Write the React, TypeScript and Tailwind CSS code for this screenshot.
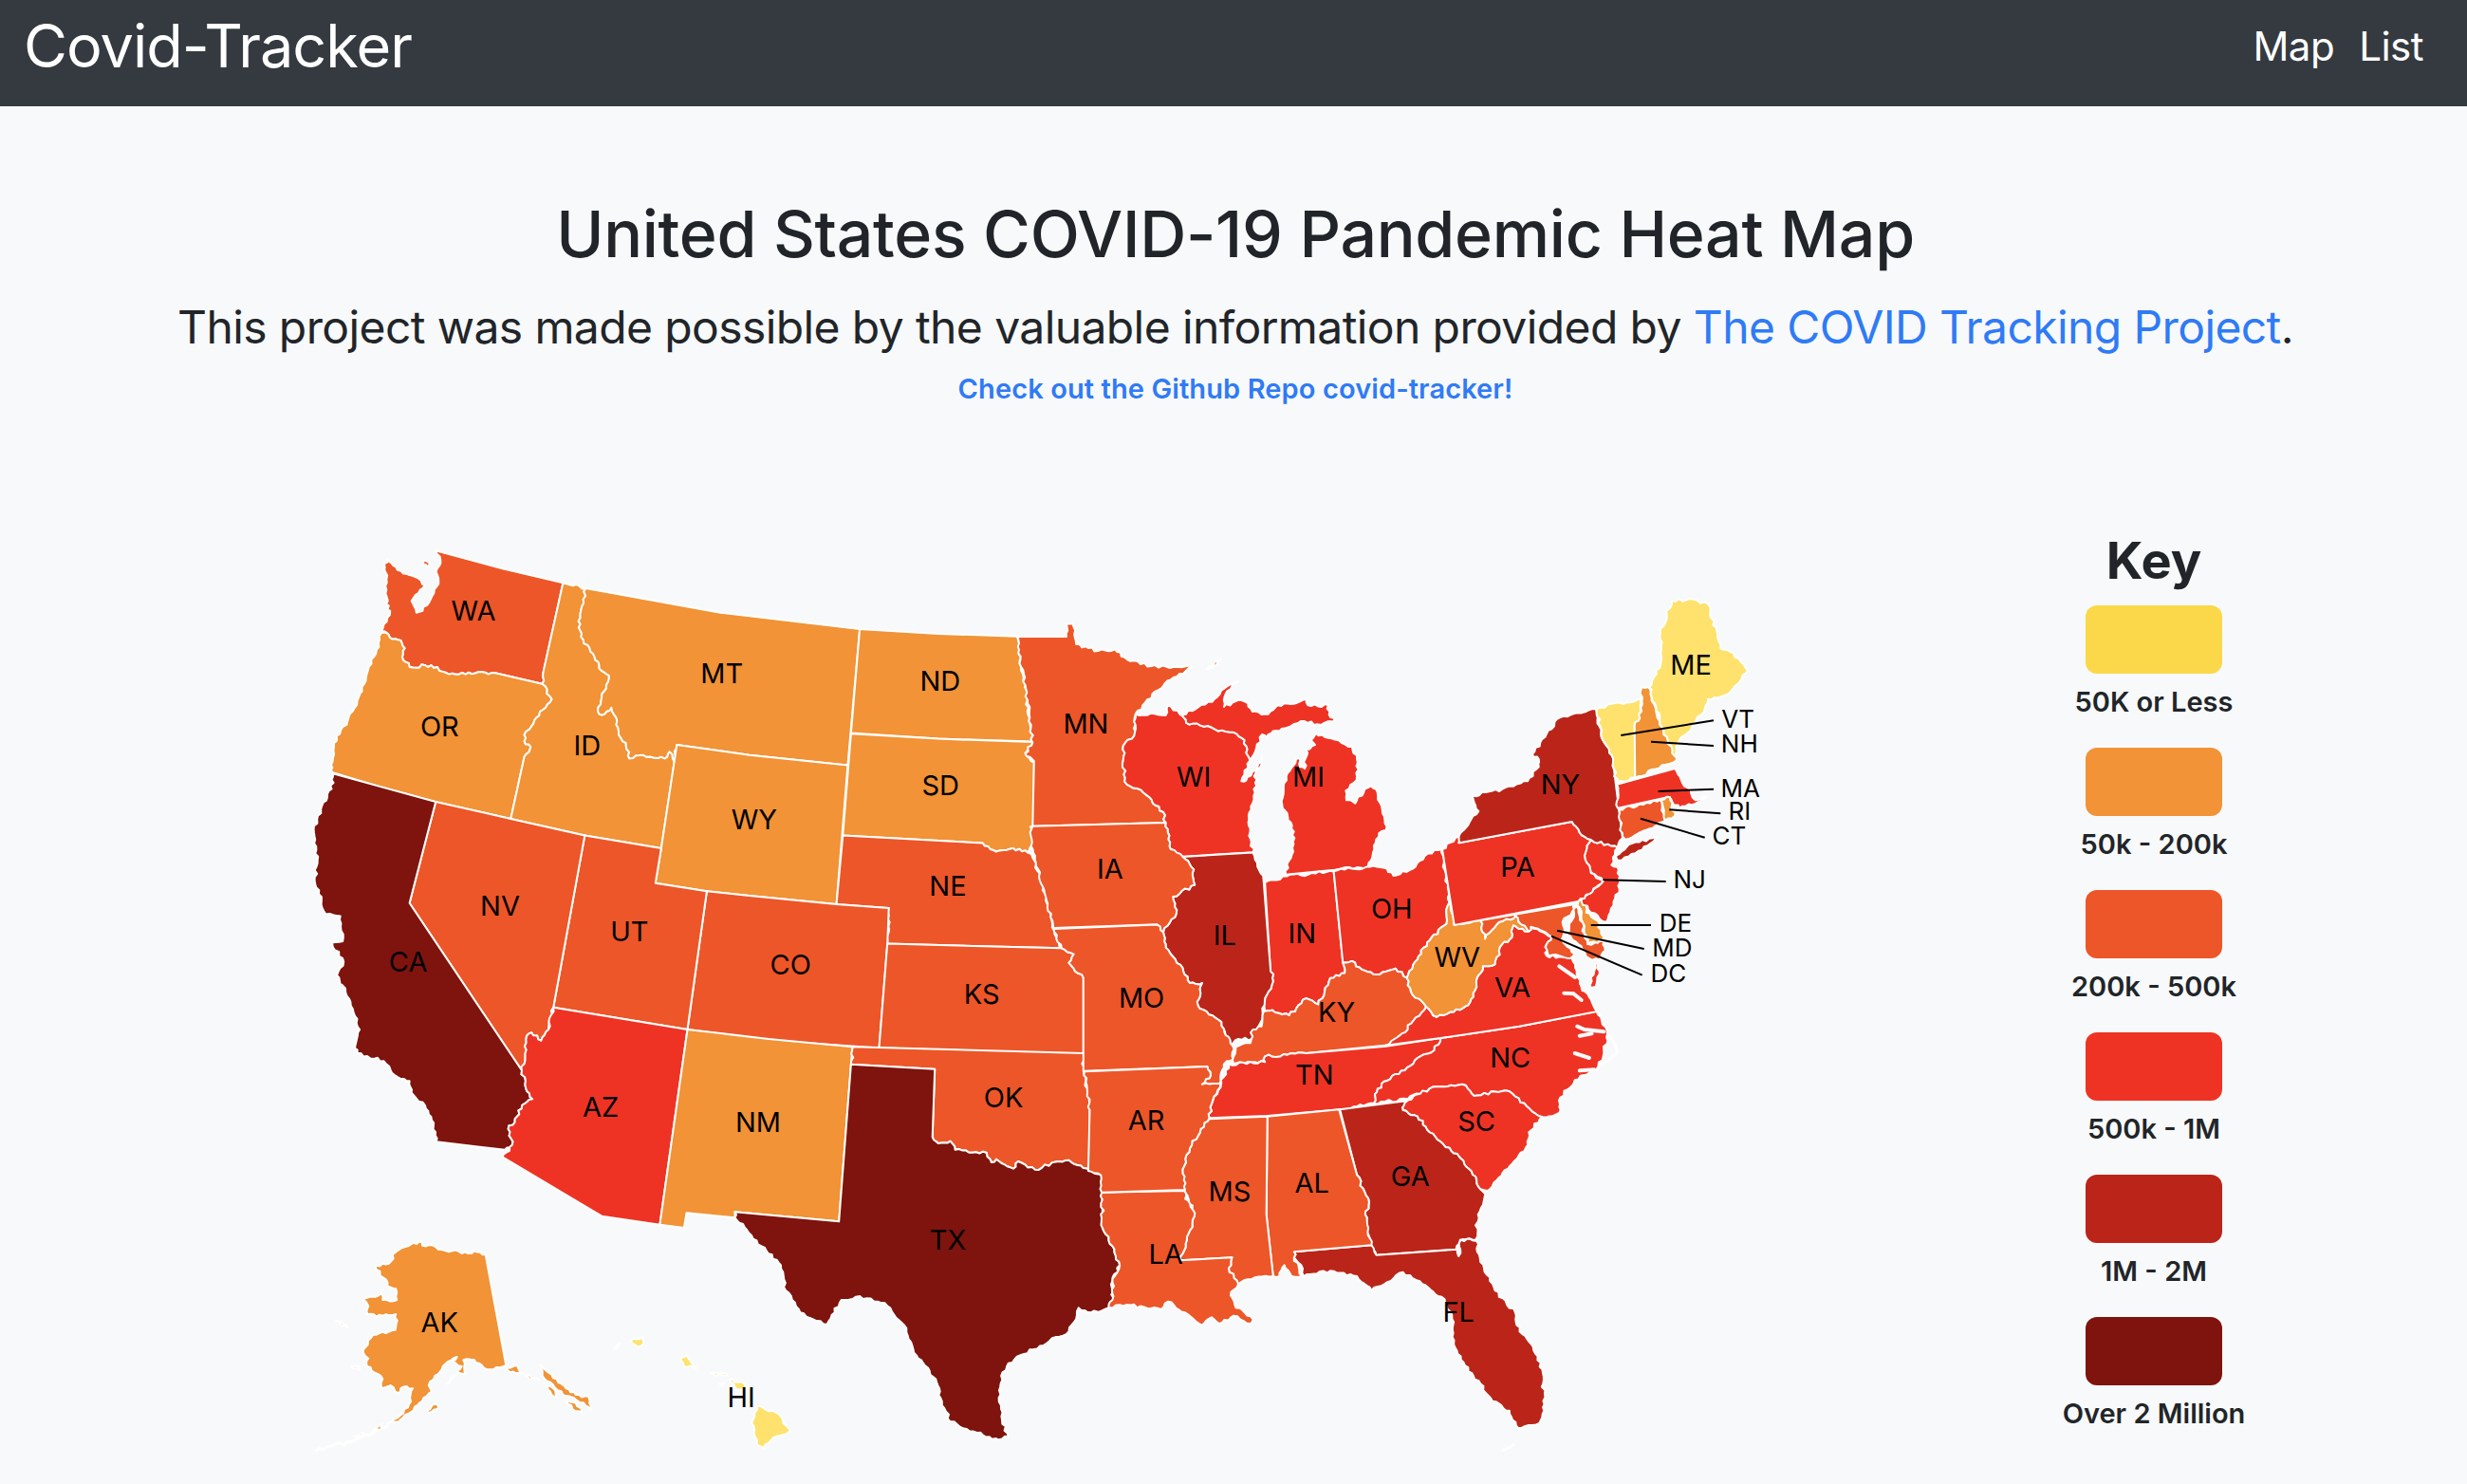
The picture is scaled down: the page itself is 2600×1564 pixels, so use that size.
import React from 'react';

// each tile is a crop of the map: [left, top, x scale, y scale]
const tiles: Record<string, number[]> = {
  a: [300, 560, 1.96, 2.8],
  b: [1050, 620, 1.96, 2.8],
  c: [1450, 600, 3, 3],
  d: [300, 1050, 1.96, 3],
  e: [1050, 1050, 1.96, 3],
  f: [1230, 700, 3, 3],
  g: [1520, 930, 3, 3],
  h: [330, 1290, 3, 3],
};

const pt = (tile: string, x: number, y: number) => {
  const [l, t, sx, sy] = tiles[tile];
  return [+(l + x / sx).toFixed(1), +(t + y / sy).toFixed(1)];
};

const readPoints = (segs: string[][]) =>
  segs.flatMap(([tile, s]) =>
    s
      .trim()
      .split(/\s+/)
      .map((p) => {
        const [x, y] = p.split(',').map(Number);
        return pt(tile, x, y);
      })
  );

// short edges are rivers and coasts, so they get a little noise. The noise comes from
// the two end points alone, so two neighbouring states get the very same border.
const wiggle = (p: number[], q: number[]) => {
  const swap = p[0] > q[0] || (p[0] === q[0] && p[1] > q[1]);
  const [a, b] = swap ? [q, p] : [p, q];
  const dx = b[0] - a[0];
  const dy = b[1] - a[1];
  const len = Math.hypot(dx, dy);
  if (len >= 50 || len < 5) return [];
  const n = Math.floor(len / 4);
  let seed = (Math.round(a[0] * 10) * 7919 + Math.round(a[1] * 10) * 104729 + Math.round(b[0] * 10) * 1299709 + Math.round(b[1] * 10) * 15485863) >>> 0;
  const out: number[][] = [];
  for (let i = 1; i <= n; i++) {
    seed = (seed * 1664525 + 1013904223) >>> 0;
    const t = i / (n + 1);
    const off = ((seed >>> 16) / 65535 - 0.5) * 3.4;
    out.push([+(a[0] + dx * t - (dy / len) * off).toFixed(1), +(a[1] + dy * t + (dx / len) * off).toFixed(1)]);
  }
  return swap ? out.reverse() : out;
};

const toPoints = (segs: string[][], flat?: boolean) => {
  const pts = readPoints(segs);
  if (flat) return pts.map((p) => p.join(',')).join(' ');
  return pts
    .flatMap((p, i) => [p, ...wiggle(p, pts[(i + 1) % pts.length])])
    .map((p) => p.join(','))
    .join(' ');
};

const Y = '#fee26d';
const O = '#f19336';
const M = '#ed5628';
const R = '#ee3325';
const D = '#bb2519';
const X = '#7e140d';

const states: { c: string; s: string[][]; flat?: boolean }[] = [
  // west
  { c: M, s: [['a', '312,57 450,110 575,152 535,410 532,450 435,418 400,415 360,422 320,412 315,400 290,395 265,402 245,380 248,345 240,322 222,318 215,305 200,295 212,255 218,235 210,215 212,130 207,105 212,82 230,105 245,125 270,135 290,160 262,205 272,240 285,235 305,190 318,155 315,110 322,85']] },
  { c: M, s: [['a', '288,85 300,95 295,105 285,98']] },
  { c: O, s: [['a', '200,300 215,305 222,318 240,322 248,345 245,380 265,402 290,395 315,400 320,412 360,422 400,415 435,418 532,450 552,495 520,550 510,575 495,600 495,620 508,635 495,665 467,848 310,798 200,755 100,712 96,690 102,625 130,560 150,500 170,420 190,350']] },
  { c: O, s: [['a', '575,152 622,168 607,265 617,320 640,370 650,405 670,425 655,490 647,530 655,542 675,520 685,550 690,600 705,625 712,670 740,660 785,670 795,650 805,680 778,935 620,897 467,848 495,665 508,635 495,620 495,600 510,575 520,550 552,495 532,450 535,410']] },
  { c: O, s: [['a', '622,168 900,240 1188,288 1163,690 960,660 810,630 805,680 795,650 785,670 740,660 712,670 705,625 690,600 685,550 675,520 655,542 647,530 655,490 670,425 650,405 640,370 617,320 607,265']] },
  { c: O, s: [['a', '1188,288 1350,302 1513,310 1520,345 1518,390 1530,450 1535,540 1545,620 1350,612 1170,595']] },
  { c: O, s: [['a', '1170,597 1350,612 1545,622 1530,655 1548,682 1548,868 1540,872 1552,910 1535,948 1505,935 1470,945 1442,920 1153,897']] },
  { c: O, flat: true, s: [['a', '810,630 960,660 1163,690 1140,1100 960,1075 872,1062 766,1038 778,935']] },
  { c: M, s: [['a', '1153,897 1442,920 1470,945 1505,935 1535,948'], ['b', '75,795 90,850 100,900 112,960 120,1010 135,1062'], ['a', '1245,1217 1248,1112 1140,1100']] },
  { c: M, flat: true, s: [['a', '872,1062 960,1075 1140,1100 1248,1112 1245,1217 1228,1525 1030,1505 832,1470']] },
  { c: M, flat: true, s: [['a', '620,897 778,935 766,1038 872,1062 832,1470 555,1405']] },
  { c: M, s: [['a', '312,798 467,848 620,897 555,1405'], ['d', '545,105 530,140 510,115 500,125 497,180 490,235'], ['a', '258,1097']] },
  { c: X, s: [['a', '100,715 312,798 258,1097'], ['d', '490,235 498,290 512,325 490,345 480,380 462,420 470,470 455,485 313,460 308,400 290,345 262,305 258,268 228,250 205,205 150,180'], ['a', '145,1525 155,1470 145,1430 120,1340 108,1310 122,1270 98,1215 120,1210 115,1135 85,1130 62,1030 68,970 60,880 80,800 97,760']] },
  { c: R, s: [['d', '555,35 832,105 775,722 655,695 450,508 470,470 462,420 480,380 490,345 512,325 498,290 490,235 497,180 500,125 510,115 530,140 545,105']] },
  { c: O, flat: true, s: [['d', '832,105 1000,135 1173,160 1170,215 1145,712 930,682 930,700 830,685 825,732 775,722']] },
  { c: M, s: [['a', '1245,1217'], ['b', '135,1062 160,1080 150,1105 180,1150 180,1375'], ['d', '1228,163']] },
  { c: M, s: [['d', '1173,160'], ['e', '180,180 180,236 193,360 192,552 150,518 130,522 80,548 45,522 35,545 0,515'], ['d', '1460,525 1450,495 1385,485 1375,458 1350,465 1338,445 1343,230 1170,215']] },
  { c: X, s: [['d', '1170,215 1343,230 1338,445 1350,465 1375,458 1385,485 1450,495 1460,525'], ['e', '0,515 35,545 45,522 80,548 130,522 150,518 192,552 218,565 220,735 240,790 255,850 240,900 240,965 232,985 195,1000 170,985 165,1020 150,1060 110,1090 50,1135 25,1160 10,1200 5,1270 12,1340 25,1392 5,1402'], ['d', '1430,1380 1375,1345 1355,1270 1345,1210 1305,1135 1280,1040 1240,970 1180,950 1150,960 1120,1038 1065,1000 1035,930 1025,850 985,790 950,730 930,700 930,682 1145,712']] },
  // midwest
  { c: M, s: [['b', '45,143 145,143 145,105 158,105 165,165 210,185 245,180 270,210 320,230 405,232 360,270 335,300 288,370 285,435 262,465 265,570 310,610 345,660 350,692 75,702 78,510 60,487 75,455 65,340 50,210']] },
  { c: R, s: [['b', '288,372 350,375 355,345 385,378'], ['f', '48,160 60,185 150,205 220,220 245,240 250,280 262,305 235,370 250,368 285,325 302,295 295,325 280,345 278,405 265,450 258,510 272,595 52,608'], ['b', '360,770 350,692 345,660 310,610 265,570 262,465 285,435']] },
  { c: R, s: [['f', '48,160 100,135 150,110 190,70 225,55 190,85 180,135 215,118 245,118 270,150 320,158 350,130 410,122 440,110 445,130 510,130 512,160 530,180 475,190 435,180 380,200 345,210 315,230 300,222 282,265 262,305 250,280 245,240 220,220 150,205 60,185']] },
  { c: R, s: [['b', '435,238 465,208 455,226']] },
  { c: R, s: [['f', '635,640 530,650 375,665 400,570 395,510 365,455 368,410 380,345 400,320 415,295 420,325 435,330 440,270 468,255 455,240 470,218 520,235 585,260 600,300 600,355 590,375 565,400 567,430 595,440 625,395 645,385 665,405 680,460 692,525 670,535 655,585']] },
  { c: R, s: [['b', '555,868 600,850 697,835 716,1105 720,1135 690,1150 665,1228 640,1210 605,1260 570,1245 552,1250 555,1210 572,1160 565,1100']] },
  { c: R, s: [['b', '697,835 765,822 800,825 820,848 860,828 885,790 920,768 935,905 930,990 890,1045 870,1095 848,1150 825,1122 785,1140 755,1125 735,1100 716,1105']] },
  { c: D, s: [['b', '385,792 530,780 552,860 565,1100 572,1160 555,1210 550,1270 528,1330 500,1330 485,1350 470,1300 465,1280 420,1240 415,1220 425,1165 400,1165 385,1120 350,1060 345,1015 372,960 365,910 410,875 408,830']] },
  { c: M, s: [['b', '75,702 350,692 360,770 385,792 408,830 410,875 365,910 372,960 345,1015 332,992 118,1002 100,900 80,800 70,720']] },
  { c: M, s: [['b', '118,1005 332,993 345,1015 350,1060 385,1120 400,1165 425,1165 415,1220 420,1240 465,1280 470,1300 488,1350'], ['e', '490,200 470,215 463,275 425,278 443,248 436,222 180,236'], ['b', '180,1150 150,1105 160,1080 135,1062']] },
  { c: M, s: [['b', '716,1105 735,1100 755,1125 785,1140 825,1122 848,1150 860,1200 888,1235 850,1290 845,1310 808,1348'], ['e', '640,180 555,190 555,208 490,213 495,160 525,148 530,105 548,95'], ['b', '552,1250 570,1245 605,1260 640,1210 665,1228 690,1150 720,1135']] },
  // south
  { c: R, s: [['e', '918,132 805,158 640,180 555,190 555,208 480,215 465,275 445,340 440,385 560,378 710,358 780,338 782,310 800,270 855,220 870,195 905,170']] },
  { c: R, s: [['e', '918,132 1080,95 1240,47 1262,120 1255,180 1240,230 1195,265 1165,320 1162,370 1128,382 1052,298 987,315 970,282 895,292 850,325 780,338 782,310 800,270 855,220 870,195 905,170']] },
  { c: R, s: [['e', '850,328 895,292 970,282 987,315 1052,298 1128,382 1100,430 1098,470 1050,550 1015,615 1000,610 990,570 965,520 940,490 895,430 870,380 840,360 842,340']] },
  { c: D, s: [['e', '710,358 850,330 842,345 840,360 870,380 895,430 940,490 965,520 990,570 1000,610 1010,625 995,690 990,770 958,770 950,800 785,818 772,785 762,690 770,650 745,565']] },
  { c: D, s: [['e', '615,808 775,787 785,818 952,800 955,822 960,770 992,773 1000,840 1030,930 1072,1000 1075,1040 1110,1120 1128,1180 1132,1290 1122,1350 1078,1365 1060,1310 1025,1280 1000,1225 960,1150 945,1100 945,1030 920,950 880,910 840,872 815,900 775,930 745,885 690,868 635,885 630,850 615,825']] },
  { c: D, s: [['e', '1045,1437 1068,1415 1060,1428']] },
  { c: M, s: [['e', '560,380 708,358 745,565 770,650 762,690 775,787 615,808 615,825 632,885 610,885 595,850 585,885 572,885 558,690']] },
  { c: M, s: [['e', '440,388 560,380 558,690 572,885 520,895 500,910 480,860 487,826 380,835 400,740 410,685 390,620 385,560 400,480 430,400']] },
  { c: M, s: [['e', '218,620 388,615 390,640 410,685 400,740 380,835 487,826 480,860 500,910 485,935 495,985 530,1020 525,1035 490,1010 460,1035 445,1015 425,1040 390,1000 355,965 340,990 270,975 232,983 240,960 240,905 255,850 240,790 220,735']] },
  { c: M, s: [['e', '182,238 436,222 443,248 425,278 463,275 445,340 440,385 430,400 400,480 385,560 390,612 218,620 216,565 190,552 193,360']] },
  // mid atlantic
  { c: R, s: [['g', '225,135 272,155 280,140 330,165 345,172 330,195 330,232 370,235 410,240 425,290 445,340 470,370 490,408'], ['e', '1080,95 918,132 805,155'], ['b', '845,1310 850,1290 888,1235 910,1265 945,1250 975,1230 985,1195 1005,1115 1030,1110 1045,1050 1065,1030']] },
  { c: R, s: [['g', '490,250 470,300 470,335 485,330 497,280']] },
  { c: O, s: [['b', '935,905 945,992'], ['g', '120,120 135,178 180,125 215,118 232,105 272,155 225,135'], ['b', '1065,1030 1045,1050 1030,1110 1005,1115 985,1195 975,1230 945,1250 910,1265 888,1235 860,1200 848,1150 870,1095 890,1045 930,990']] },
  { c: M, s: [['g', '120,120 415,70 420,85 380,125 385,160 378,180 420,225 405,240 370,232 335,232 330,195 345,172 280,140 272,155 232,105 215,118 180,125 135,178']] },
  { c: M, s: [['g', '425,75 460,195 512,185 515,215 495,245 465,240 430,195 395,165 410,120 415,85']] },
  { c: O, s: [['g', '430,60 445,45 455,95 490,120 510,182 460,195']] },
  { c: R, s: [['c', '680,855 765,880 745,935 768,950 770,1010 730,1115 680,1085 650,1050 660,1035 720,985 680,960 660,905']] },
  { c: R, s: [['c', '210,885 262,845 262,865 620,798 650,840 680,855 660,905 680,960 718,985 685,1020 640,1050 248,1125']] },
  // north east
  { c: D, s: [['c', '583,468 695,442 712,520 750,610 780,850 765,880 680,855 650,840 620,798 265,865 263,842 325,765 305,715 400,695 480,670 515,625 515,600 495,585 540,520']] },
  { c: D, s: [['c', '760,905 765,920 830,890 895,845 875,850 800,870']] },
  { c: Y, s: [['c', '700,440 838,408 835,470 818,495 820,660 762,675 750,610 712,520']] },
  { c: O, s: [['c', '842,372 860,372 905,500 945,590 950,605 820,660 818,495 835,470']] },
  { c: Y, s: [['c', '865,372 900,300 905,230 900,200 935,100 1005,95 1050,110 1090,250 1120,260 1175,320 1135,370 1100,400 1050,410 1040,440 995,510 960,540 945,590 905,500']] },
  { c: R, s: [['c', '762,680 945,630 965,665 985,690 1010,730 1045,720 1000,745 960,755 925,720 765,755']] },
  { c: M, s: [['c', '768,760 900,728 915,795 790,855 780,845']] },
  { c: O, s: [['c', '902,730 930,720 945,780 915,795']] },
  // alaska
  { c: O, s: [['h', '545,97 510,85 490,93 440,85 395,80 380,68 345,68 335,55 300,70 260,90 240,125 200,130 200,145 230,175 235,197 262,205 265,240 220,240 215,220 155,240 175,260 172,285 220,290 262,285 260,335 230,345 200,350 190,350 165,390 160,410 175,425 170,450 195,470 220,490 218,520 245,510 270,535 285,515 315,520 300,580 275,605 235,630 270,625 300,600 345,560 375,530 365,510 385,480 410,450 455,420 440,435 470,450 445,480 420,505 460,470 480,475 475,430 510,430 540,455 560,460 610,447']] },
  { c: O, s: [['h', '612,452 645,447 650,460 690,485 715,492 695,490 650,470 615,462']] },
  { c: O, s: [['h', '720,445 745,470 770,490 800,520 830,540 870,545 880,590 855,565 825,550 790,540 750,500 725,480']] },
  { c: O, s: [['h', '730,505 760,520 770,550 750,530']] },
  { c: O, s: [['h', '800,560 830,565 850,595 820,585']] },
  { c: O, s: [['h', '190,650 220,632 215,648']] },
  { c: O, s: [['h', '130,672 160,660 155,668']] },
  { c: O, s: [['h', '360,590 375,575 390,570 398,578 365,597']] },
  { c: O, s: [['h', '120,450 145,450 147,462']] },
  { c: O, s: [['h', '72,305 90,310 110,328 90,322']] },
  // hawaii
  { c: Y, s: [['d', '975,1295 1020,1320 1030,1350 1045,1372 1010,1395 990,1430 975,1415 965,1350']] },
  { c: Y, s: [['d', '920,1210 935,1220 960,1235 950,1250 930,1235']] },
  { c: Y, s: [['d', '880,1190 915,1195 910,1200 885,1195']] },
  { c: Y, s: [['d', '898,1225 908,1222 905,1235']] },
  { c: Y, s: [['d', '830,1135 850,1175 825,1170 817,1150']] },
  { c: Y, s: [['d', '715,1090 740,1078 742,1095 730,1108']] },
  { c: Y, s: [['d', '680,1115 692,1098 688,1112']] },
];

// bays and sounds, painted over the fills
const inlets: string[][][] = [
  [['g', '370,265 420,300']],
  [['g', '385,350 415,352 440,372']],
  [['g', '440,250 430,270 445,340']],
  [['e', '1200,95 1215,105 1255,112']],
  [['e', '1205,125 1230,118']],
  [['e', '1195,180 1225,195']],
  [['e', '1205,235 1235,232']],
];

// barrier islands and the Aleutians show only as a white line
const whiteLines: string[][][] = [
  [['e', '1242,50 1283,175 1240,232']],
  [['h', '235,640 130,685 10,715']],
];

const labels: [string, string, number, number][] = [
  ['WA', 'a', 390, 235], ['OR', 'a', 320, 575], ['ID', 'a', 625, 630], ['MT', 'a', 903, 418],
  ['ND', 'a', 1354, 440], ['SD', 'a', 1355, 748], ['WY', 'a', 970, 850], ['NV', 'a', 445, 1105],
  ['UT', 'a', 712, 1180], ['CO', 'a', 1045, 1277], ['NE', 'a', 1370, 1047], ['KS', 'a', 1440, 1365],
  ['CA', 'a', 255, 1270], ['AZ', 'd', 653, 348], ['NM', 'd', 978, 398], ['TX', 'd', 1370, 768],
  ['AK', 'd', 320, 1030], ['HI', 'd', 943, 1268], ['OK', 'd', 1485, 318], ['MN', 'b', 185, 398],
  ['WI', 'b', 408, 555], ['MI', 'b', 645, 555], ['IA', 'b', 235, 828], ['IL', 'b', 472, 1022],
  ['IN', 'b', 632, 1017], ['OH', 'b', 817, 945], ['PA', 'b', 1077, 822], ['NY', 'b', 1165, 577],
  ['ME', 'b', 1435, 225], ['MO', 'b', 300, 1208], ['KY', 'b', 703, 1250], ['WV', 'b', 952, 1087],
  ['VA', 'b', 1066, 1177], ['TN', 'e', 657, 247], ['NC', 'e', 1062, 192], ['SC', 'e', 992, 395],
  ['GA', 'e', 855, 567], ['AL', 'e', 652, 588], ['MS', 'e', 482, 615], ['AR', 'e', 310, 390],
  ['LA', 'e', 350, 815], ['FL', 'e', 955, 997],
];

// small states get a label beside the map and a line to it
const callouts: [string, number, number, number, number, number, number][] = [
  ['VT', 1145, 472, 775, 525, 1068, 478],
  ['NH', 1150, 550, 870, 545, 1068, 558],
  ['MA', 1153, 690, 893, 702, 1068, 695],
  ['RI', 1150, 763, 928, 760, 1090, 772],
  ['CT', 1117, 842, 837, 788, 1040, 848],
  ['NJ', 992, 980, 718, 982, 917, 987],
  ['DE', 948, 1118, 680, 1125, 870, 1125],
  ['MD', 937, 1195, 573, 1142, 848, 1200],
  ['DC', 925, 1277, 555, 1160, 842, 1283],
];

const keyRows = [
  { color: 'bg-[#fbd84a]', label: '50K or Less' },
  { color: 'bg-[#f19336]', label: '50k - 200k' },
  { color: 'bg-[#ed5628]', label: '200k - 500k' },
  { color: 'bg-[#ee3325]', label: '500k - 1M' },
  { color: 'bg-[#bb2519]', label: '1M - 2M' },
  { color: 'bg-[#7e140d]', label: 'Over 2 Million' },
];

const UsMap = () => (
  <svg viewBox="300 560 1600 1004" className="w-[1600px] h-[1004px] shrink-0">
    {whiteLines.map((seg, i) => (
      <polyline key={i} points={toPoints(seg)} fill="none" stroke="#ffffff" strokeWidth={3} strokeLinecap="round" />
    ))}
    {states.map((st, i) => (
      <polygon key={i} points={toPoints(st.s, st.flat)} fill={st.c} stroke="#ffffff" strokeWidth={2} strokeLinejoin="round" />
    ))}
    {inlets.map((seg, i) => (
      <polyline key={i} points={toPoints(seg, true)} fill="none" stroke="#f8f9fa" strokeWidth={4} strokeLinecap="round" />
    ))}
    {labels.map(([name, tile, x, y]) => {
      const [px, py] = pt(tile, x, y);
      return (
        <text key={name} x={px} y={py} textAnchor="middle" dominantBaseline="central" fontSize={29} fill="#000">
          {name}
        </text>
      );
    })}
    {callouts.map(([name, tx, ty, x1, y1, x2, y2]) => {
      const [lx, ly] = pt('c', tx, ty);
      const [ax, ay] = pt('c', x1, y1);
      const [bx, by] = pt('c', x2, y2);
      return (
        <g key={name}>
          <line x1={ax} y1={ay} x2={bx} y2={by} stroke="#000" strokeWidth={2} />
          <text x={lx} y={ly} textAnchor="middle" dominantBaseline="central" fontSize={26} fill="#000">
            {name}
          </text>
        </g>
      );
    })}
  </svg>
);

const App = () => {
  return (
    <div className="h-screen overflow-hidden bg-[#f8f9fa] text-[#212529] font-['Inter',sans-serif]">
      <nav className="h-[112px] bg-[#343a40] flex items-start justify-between pl-[25px] pr-[46px] text-white">
        <a className="text-[63px] leading-[96px] tracking-[-1px]">Covid-Tracker</a>
        <div className="flex gap-[26px] text-[42px] leading-[98px] tracking-[-0.5px]">
          <a>Map</a>
          <a>List</a>
        </div>
      </nav>

      <div className="text-center pl-[4px]">
        <h1 className="mt-[90px] text-[68px] leading-[88px] font-medium tracking-[-0.3px]">
          United States COVID-19 Pandemic Heat Map
        </h1>
        <h2 className="mt-[25px] text-[48px] leading-[60px] font-normal tracking-[-0.6px]">
          This project was made possible by the valuable information provided by{' '}
          <a className="text-[#2f7bf6]">The COVID Tracking Project</a>.
        </h2>
        <a className="block mt-[15px] text-[29px] leading-[40px] font-semibold tracking-[0.1px] text-[#2f7bf6]">
          Check out the Github Repo covid-tracker!
        </a>
      </div>

      <div className="flex mt-[130px]">
        <div className="ml-[300px]">
          <UsMap />
        </div>
        <div className="ml-[250px] w-[240px] flex flex-col items-center">
          <h3 className="text-[54px] leading-[62px] mb-[16px] font-bold">Key</h3>
          {keyRows.map((row) => (
            <div key={row.label} className="flex flex-col items-center h-[150px]">
              <div className={`w-[144px] h-[72px] rounded-[12px] ${row.color}`} />
              <span className="mt-[12px] text-[29px] leading-[36px] font-semibold whitespace-nowrap">{row.label}</span>
            </div>
          ))}
        </div>
      </div>
    </div>
  );
};

export default App;
